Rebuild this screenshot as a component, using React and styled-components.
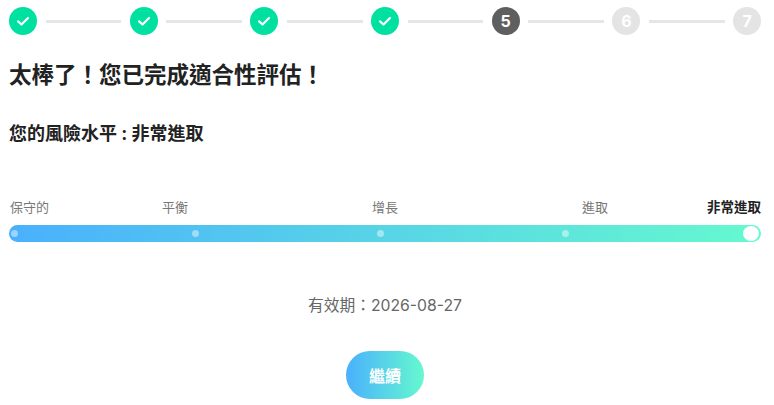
import React from "react";
import styled, { createGlobalStyle } from "styled-components";

const Global = createGlobalStyle`
  html, body { margin: 0; padding: 0; background: #fff; overflow: hidden; }
  body { font-family: Inter, "Noto Sans CJK TC", sans-serif; color: #222; }
`;
const Page = styled.div`
  width: 774px; height: 405px; box-sizing: border-box;
  padding: 7px 13px 0 9px; display: flex; flex-direction: column;
`;
const Stepper = styled.div`display: flex; align-items: center; height: 28px;`;
const Dot = styled.div`
  width: 28px; height: 28px; border-radius: 50%; flex: none;
  display: flex; align-items: center; justify-content: center;
  background: ${p => p.$state === "done" ? "#00e0a0" : p.$state === "current" ? "#5f5f5f" : "#e4e4e4"};
  color: #fff; font-size: 16px; font-weight: 700; line-height: 1;
`;
const Line = styled.div`flex: 1; height: 3px; margin: 0 8.5px; background: #e6e6e6;`;
const Title = styled.h1`margin: 25px 0 0; font-size: 22.5px; line-height: 30px; font-weight: 700; color: #222;`;
const Level = styled.h2`margin: 32px 0 0; font-size: 18px; line-height: 24px; font-weight: 700; color: #222;`;
const Labels = styled.div`
  margin-top: 51px; display: grid; grid-template-columns: 153px 210px 210px 125px 1fr; height: 20px;
`;
const Label = styled.span`
  font-size: ${p => p.$active ? "13.5px" : "13px"}; line-height: 20px; white-space: nowrap; color: ${p => p.$active ? "#222" : "#777"};
  font-weight: ${p => p.$active ? 700 : 400}; text-align: ${p => p.$active ? "right" : "left"};
  padding-left: ${p => p.$first ? "1px" : "0"};
`;
const Track = styled.div`
  margin-top: 8px; height: 17px; border-radius: 9px; padding: 0 2px;
  background: linear-gradient(90deg, #4ab0fd, #65f9cf);
  display: flex; align-items: center; justify-content: space-between;
`;
const Tick = styled.i`display: block; width: 7px; height: 7px; border-radius: 50%; background: rgba(255,255,255,.45);`;
const Ticks = styled.div`display: grid; grid-template-columns: 181px 185px 185px 1fr; align-items: center; flex: 1;`;
const Thumb = styled.i`display: block; flex: none; width: 16px; height: 15px; border-radius: 50%; background: #fff;`;
const Expiry = styled.p`margin: 52px 0 0; text-align: center; font-size: 15.75px; line-height: 24px; color: #666;`;
const Continue = styled.button`
  align-self: center; margin: 33px 0 0; width: 78px; height: 48px; border: 0; border-radius: 24px;
  background: linear-gradient(90deg, #4ab0fd, #65f9cf); color: #fff; font: 700 16px Inter, "Noto Sans CJK TC", sans-serif;
`;
const Check = () => (
  <svg width="16" height="16" viewBox="0 0 16 16" fill="none" stroke="#fff" strokeWidth="2.2" strokeLinecap="round" strokeLinejoin="round">
    <path d="M3 8.4 6.5 11.5 13 5" />
  </svg>
);

export default function App() {
  const steps = [1, 2, 3, 4, 5, 6, 7];
  return (
    <Page>
      <Global />
      <Stepper>
        {steps.map(n => {
          const state = n < 5 ? "done" : n === 5 ? "current" : "todo";
          return (
            <React.Fragment key={n}>
              <Dot $state={state}>{n < 5 ? <Check /> : n}</Dot>
              {n < 7 && <Line />}
            </React.Fragment>
          );
        })}
      </Stepper>
      <Title>太棒了！您已完成適合性評估！</Title>
      <Level>您的風險水平 : 非常進取</Level>
      <Labels>
        <Label $first>保守的</Label>
        <Label>平衡</Label>
        <Label>增長</Label>
        <Label>進取</Label>
        <Label $active>非常進取</Label>
      </Labels>
      <Track>
        <Ticks>
          <Tick /><Tick /><Tick /><Tick />
        </Ticks>
        <Thumb />
      </Track>
      <Expiry>有效期：2026-08-27</Expiry>
      <Continue>繼續</Continue>
    </Page>
  );
}
